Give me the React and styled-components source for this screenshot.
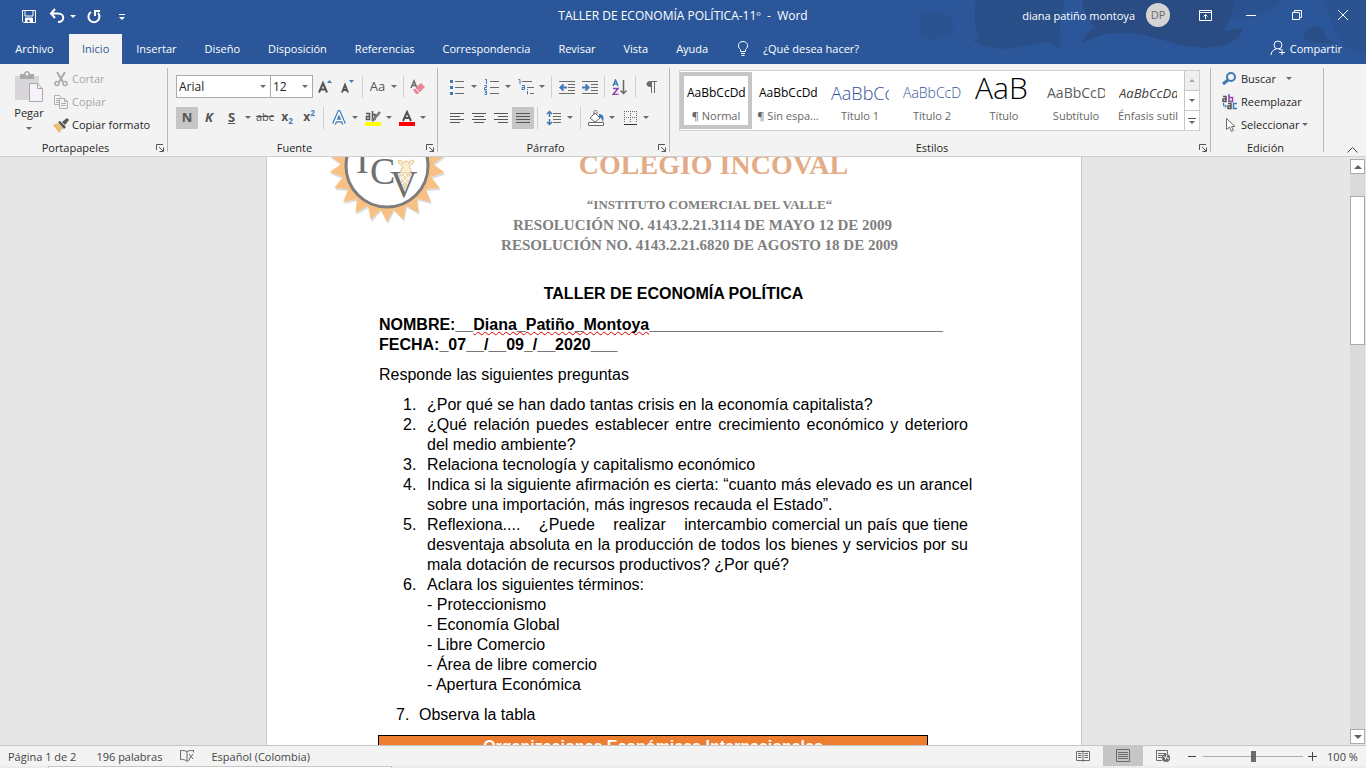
import React from 'react';
import styled, { createGlobalStyle } from 'styled-components';

const C = {
  blue: '#2b579a',
  ribbon: '#f3f3f3',
  line: '#c6c6c6',
  icon: '#6a6a6a',
  accent: '#3f7ab5',
  text: '#262626',
};

const Global = createGlobalStyle`
  *, *::before, *::after { box-sizing: border-box; }
  body { margin: 0; font-family: "Open Sans", "Noto Sans", sans-serif; font-size: 11px; color: ${C.text}; }
  button, input, select { font: inherit; color: inherit; }
  button { border: 0; background: none; padding: 0; cursor: pointer; }
  svg { display: block; flex: none; }
`;

const Shell = styled.div`
  display: flex;
  flex-direction: column;
  height: 100vh;
  overflow: hidden;
`;

/* ---------- title bar and tabs ---------- */

const Header = styled.header`
  position: relative;
  background: ${C.blue};
  color: #fff;
`;

const Waves = styled.svg`
  position: absolute;
  top: 0;
  right: 0;
`;

const TitleBar = styled.div`
  position: relative;
  display: grid;
  grid-template-columns: 1fr auto 1fr;
  align-items: center;
  height: 32px;
`;

const DocName = styled.span`
  padding-bottom: 2px;
  font-size: 12px;
`;

const QuickAccess = styled.div`
  display: flex;
  align-items: center;
  padding-left: 21px;
`;

const QuickButton = styled.button`
  display: flex;
  align-items: center;
  gap: 5px;
  margin-right: ${(p) => p.$after}px;
  color: #fff;
`;

const Account = styled.div`
  display: flex;
  align-items: center;
  justify-content: flex-end;
  padding-bottom: 2px;
`;

const Avatar = styled.span`
  width: 24px;
  height: 24px;
  margin: 0 12px 0 11px;
  border-radius: 50%;
  background: #d4d4d4;
  color: #6a6a6a;
  text-align: center;
  line-height: 24px;
`;

const WindowButton = styled.button`
  display: flex;
  align-items: center;
  justify-content: center;
  width: 46px;
  height: 30px;
  color: #fff;
`;

const TabRow = styled.nav`
  position: relative;
  display: flex;
  align-items: flex-end;
  height: 32px;
`;

const Tab = styled.button`
  height: 30px;
  padding: 0 ${(p) => (p.$active ? 13 : 14)}px 2px;
  background: ${(p) => (p.$active ? C.ribbon : 'transparent')};
  color: ${(p) => (p.$active ? C.blue : '#fff')};
  &:first-child { min-width: 69px; }
`;

const TellMe = styled.button`
  display: flex;
  align-items: center;
  gap: 13px;
  height: 30px;
  padding: 0 14px 2px;
  color: #fff;
`;

const Share = styled(TellMe)`
  gap: 4px;
  margin-left: auto;
  padding: 0 24px 2px 0;
`;

/* ---------- ribbon ---------- */

const Ribbon = styled.div`
  display: flex;
  height: 93px;
  background: ${C.ribbon};
  border-bottom: 1px solid #d0d0d0;
`;

const Group = styled.section`
  display: flex;
  flex-direction: column;
  width: ${(p) => p.$w}px;
`;

const GroupBody = styled.div`
  flex: 1;
  display: flex;
  flex-direction: ${(p) => (p.$rows ? 'column' : 'row')};
  gap: ${(p) => (p.$rows ? 8 : 0)}px;
  padding: ${(p) => p.$pad};
`;

const GroupFoot = styled.div`
  display: flex;
  align-items: center;
  height: 16px;
  padding: 0 3px 1px 0;
`;

const GroupName = styled.span`
  flex: 1;
  text-align: center;
  padding-right: ${(p) => (p.$launcher ? 5 : 0)}px;
`;

const GroupRule = styled.div`
  width: 1px;
  margin: 4px 0;
  background: #b9b9b9;
`;

const ToolRow = styled.div`
  display: flex;
  align-items: center;
  height: 23px;
`;

const Tool = styled.button`
  display: flex;
  align-items: center;
  justify-content: center;
  gap: 5px;
  width: ${(p) => p.$w || 22}px;
  height: 22px;
  background: ${(p) => (p.$on ? '#c6c6c6' : 'transparent')};
  color: #555;
`;

const Glyph = styled.span`
  min-width: 16px;
  text-align: center;
  white-space: nowrap;
  font-size: ${(p) => p.$size || 13}px;
  line-height: 18px;
  padding-bottom: 1px;
  font-weight: ${(p) => (p.$bold ? 700 : 400)};
  font-style: ${(p) => (p.$italic ? 'italic' : 'normal')};
  text-decoration: ${(p) => p.$line || 'none'};
  sub, sup { font-size: 8px; line-height: 0; color: ${C.accent}; }
`;

const ToolRule = styled.div`
  width: 1px;
  height: 22px;
  margin: 0 3px;
  background: #d0d0d0;
`;

const Field = styled.label`
  display: flex;
  align-items: center;
  width: ${(p) => p.$w}px;
  height: 23px;
  margin-right: ${(p) => p.$after}px;
  padding-right: 4px;
  background: #fff;
  border: 1px solid #ababab;
`;

const Choice = styled.select`
  flex: 1;
  min-width: 0;
  height: 100%;
  padding: 0 2px;
  border: 0;
  appearance: none;
  background: transparent;
  font-size: 12px;
  color: #222;
`;

const PasteButton = styled.button`
  display: flex;
  flex-direction: column;
  align-items: center;
  width: 42px;
  margin-right: 3px;
  line-height: 20px;
`;

const PasteCaret = styled.span`
  padding-top: 4px;
`;

const CommandList = styled.div`
  display: flex;
  flex-direction: column;
`;

const Command = styled.button`
  display: flex;
  align-items: center;
  gap: 3px;
  height: 23px;
  color: ${(p) => (p.disabled ? '#a6a6a6' : C.text)};
`;

const CaretGap = styled.span`
  width: 4px;
`;

const Gallery = styled.div`
  display: flex;
  height: 61px;
  background: #fff;
  border: 1px solid #d0d0d0;
`;

const StyleCard = styled.button`
  display: flex;
  flex-direction: column;
  width: 72px;
  height: 57px;
  margin-top: 1px;
  padding: 0 3px;
  border: 4px solid ${(p) => (p.$on ? '#c6c6c6' : 'transparent')};
`;

const Sample = styled.span`
  width: 100%;
  height: 31px;
  overflow: hidden;
  white-space: nowrap;
  text-align: left;
  line-height: ${(p) => (p.$size > 20 ? 24 : 34)}px;
  font-size: ${(p) => p.$size}px;
  font-weight: ${(p) => (p.$light ? 300 : 400)};
  font-style: ${(p) => (p.$italic ? 'italic' : 'normal')};
  color: ${(p) => p.$color || '#000'};
`;

const StyleName = styled.span`
  align-self: center;
  line-height: 18px;
  white-space: nowrap;
  color: #666;
`;

const GalleryNav = styled.div`
  display: flex;
  flex-direction: column;
  width: 15px;
  border-left: 1px solid ${C.line};
`;

const GalleryButton = styled.button`
  flex: 1;
  display: flex;
  flex-direction: column;
  gap: 2px;
  align-items: center;
  justify-content: center;
  background: ${(p) => (p.disabled ? '#e5e5e5' : '#fff')};
  opacity: ${(p) => (p.disabled ? 0.6 : 1)};
  & + & { border-top: 1px solid ${C.line}; }
`;

const Collapse = styled.button`
  align-self: flex-end;
  margin: 0 8px 3px auto;
`;

/* ---------- document ---------- */

const Workspace = styled.main`
  flex: 1;
  min-height: 0;
  display: flex;
  background: #e6e6e6;
`;

const Canvas = styled.div`
  flex: 1;
  display: flex;
  justify-content: center;
  align-items: flex-start;
  overflow: hidden;
`;

const Sheet = styled.article`
  width: 816px;
  min-height: 1056px;
  margin-top: -91px;
  padding: 40px 113px 96px 112px;
  background: #fff;
  border: 1px solid ${C.line};
  color: #000;
  font-family: "Liberation Sans", Arial, sans-serif;
  font-size: 16px;
  line-height: 20px;
`;

const Letterhead = styled.div`
  display: flex;
  height: 177px;
  margin-left: -50px;
`;

const LetterText = styled.div`
  flex: 1;
  padding: 40px 14px 0 0;
  text-align: center;
  white-space: nowrap;
  font-family: "Liberation Serif", "Times New Roman", serif;
  font-weight: 700;
  color: #808080;
`;

const School = styled.div`
  margin-bottom: 12px;
  padding-left: 28px;
  font-size: 28px;
  line-height: 36px;
  color: #e3ac86;
`;

const LetterLine = styled.div`
  padding-left: ${(p) => p.$indent || 0}px;
  font-size: ${(p) => p.$size}px;
`;

const Heading = styled.h1`
  margin: 0 0 11px;
  font-size: 16px;
  text-align: center;
`;

const Para = styled.p`
  margin: 0 0 10px;
  font-weight: ${(p) => (p.$bold ? 700 : 400)};
  white-space: nowrap;
`;

const Misspelt = styled.span`
  text-decoration: underline wavy #e00000 1px;
  text-decoration-skip-ink: none;
  text-underline-offset: 1px;
`;

const Questions = styled.ol`
  margin: 0 0 10px;
  padding: 0 0 0 ${(p) => p.$indent}px;
  list-style: none;
`;

const Question = styled.li`
  display: flex;
`;

const Num = styled.span`
  flex: none;
  width: ${(p) => p.$w || 24}px;
`;

const Justified = styled.div`
  flex: 1;
  min-width: 0;
  text-align: justify;
`;

const FullLine = styled.div`
  white-space: nowrap;
`;

const OrgTable = styled.table`
  width: 550px;
  margin-left: -1px;
  border-collapse: collapse;
  th { padding: 0; border: 1px solid #000; background: #ed7d31; color: #fff; height: 22px; }
  td { border: 1px solid #000; height: 22px; }
`;

const ScrollBar = styled.div`
  display: flex;
  flex-direction: column;
  width: 18px;
  padding: 2px 1px 1px 2px;
`;

const ScrollButton = styled.button`
  display: flex;
  align-items: center;
  justify-content: center;
  height: 15px;
  background: #fff;
  border: 1px solid #ababab;
`;

const ScrollTrack = styled.div`
  flex: 1;
  padding-top: 22px;
  background: #dadada;
`;

const ScrollThumb = styled.div`
  height: 28%;
  background: #fff;
  border: 1px solid #ababab;
`;

/* ---------- status bar ---------- */

const StatusBar = styled.footer`
  display: flex;
  align-items: center;
  height: 21px;
  background: ${C.ribbon};
  border-top: 1px solid ${C.line};
  padding-right: 8px;
  color: #444;
`;

const StatusItem = styled.button`
  margin-left: ${(p) => p.$before}px;
  white-space: nowrap;
`;

const Views = styled.div`
  display: flex;
  height: 20px;
  margin-left: auto;
`;

const ViewButton = styled.button`
  display: flex;
  align-items: center;
  justify-content: center;
  width: 40px;
  background: ${(p) => (p.$on ? '#c6c6c6' : 'transparent')};
`;

const ZoomStep = styled.button`
  width: 10px;
  margin: 0 5px;
`;

const ZoomRange = styled.input`
  width: 100px;
  height: 12px;
  margin: 0;
  appearance: none;
  background: linear-gradient(#ababab, #ababab) center / 100% 1px no-repeat;
  &::-webkit-slider-thumb { appearance: none; width: 5px; height: 11px; background: #6a6a6a; }
`;

const ZoomValue = styled.button`
  width: 31px;
  margin-left: 4px;
  white-space: nowrap;
`;

const DeskEdge = styled.div`
  height: 2px;
  padding-left: 48px;
  background: #ececec;
`;

const DeskBox = styled.div`
  width: 344px;
  height: 2px;
  background: #fff;
  border: 1px solid ${C.line};
  border-bottom: 0;
`;

/* ---------- drawings ---------- */

const Caret = ({ up, light }) => (
  <svg width="6" height="3" viewBox="0 0 6 3" fill={light ? '#fff' : '#6a6a6a'} aria-hidden="true">
    <path d={up ? 'M0 3h6L3 0z' : 'M0 0h6L3 3z'} />
  </svg>
);

const Pic = ({ w = 16, h = 16, children, ...rest }) => (
  <svg width={w} height={h} viewBox={`0 0 ${w} ${h}`} fill="none" stroke={C.icon} aria-hidden="true" {...rest}>
    {children}
  </svg>
);

const Launcher = () => (
  <button aria-label="Más opciones">
    <Pic w={8} h={8} stroke="#555">
      <path d="M.5 6V.5H7M3 3l4 4M7.5 3.5v4h-4" />
    </Pic>
  </button>
);

const Lines = ({ rows, color = '#555' }) => (
  <Pic stroke={color}>
    {rows.map(([x1, x2], i) => (
      <path key={i} d={`M${x1} ${3.5 + i * 3}H${x2}`} />
    ))}
  </Pic>
);

function Seal() {
  const teeth = 22;
  const pts = [];
  for (let i = 0; i < teeth * 2; i++) {
    const r = i % 2 ? 46 : 58;
    const a = Math.PI / 2 + (i * Math.PI) / teeth;
    pts.push(`${(58 + r * Math.cos(a)).toFixed(1)},${(57 + r * Math.sin(a)).toFixed(1)}`);
  }
  const points = pts.join(' ');
  return (
    <svg width="116" height="118" viewBox="0 0 116 118" aria-label="ICV">
      <polygon points={points} fill="#dcdcdc" transform="translate(1 2)" />
      <polygon points={points} fill="#f8c183" />
      <circle cx="58" cy="59" r="41" fill="#fff" stroke="#7d7d7d" strokeWidth="3" />
      <g fill="#707070" fontFamily="Liberation Serif" fontSize="38">
        <text x="27" y="66">I</text>
        <text x="41" y="77">C</text>
        <text x="61" y="90">V</text>
      </g>
      <path d="M69 67h14l-7 18z" fill="#ecd9b8" />
      <path d="M71 69l8 8M75 67l6 6M81 69l-8 8M77 67l-6 6" stroke="#fff" strokeWidth="1" />
      <path d="M69 54c1 4 4 3 5 7-3 0-3 5 0 5h6c3 0 3-5 0-5 1-4 4-3 5-7-3-2-5 0-5 3-1-4-5-4-6 0 0-3-2-5-5-3z" fill="#faedd6" stroke="#e8c389" />
    </svg>
  );
}

const tabs = ['Archivo', 'Inicio', 'Insertar', 'Diseño', 'Disposición', 'Referencias', 'Correspondencia', 'Revisar', 'Vista', 'Ayuda'];

const styleCards = [
  { name: '¶ Normal', size: 12, text: 'AaBbCcDd', on: true },
  { name: '¶ Sin espa...', size: 12, text: 'AaBbCcDd' },
  { name: 'Título 1', size: 18, text: 'AaBbCc', light: true, color: '#2f5496' },
  { name: 'Título 2', size: 14, text: 'AaBbCcDd', light: true, color: '#2f5496' },
  { name: 'Título', size: 30, text: 'AaB', light: true },
  { name: 'Subtítulo', size: 14, text: 'AaBbCcD', color: '#5a5a5a' },
  { name: 'Énfasis sutil', size: 13, text: 'AaBbCcDd', italic: true, color: '#404040' },
];

const terms = ['Proteccionismo', 'Economía Global', 'Libre Comercio', 'Área de libre comercio', 'Apertura Económica'];

const reflection =
  'Reflexiona....\u00a0\u00a0\u00a0 ¿Puede\u00a0\u00a0\u00a0 realizar\u00a0\u00a0\u00a0 intercambio comercial un país que tiene desventaja absoluta en la producción de todos los bienes y servicios por su mala dotación de recursos productivos? ¿Por qué?';

function Top() {
  return (
    <Header>
      <Waves width="446" height="64" viewBox="0 0 446 64" fill="#2a4c82" aria-hidden="true">
        <path d="M0 13c14-2 30 0 34 8s-6 16-8 14c-8 6-18 4-26 3z" opacity=".3" />
        <path d="M56 0h88c-2 18-6 32-4 48-9-6-18-6-27-4-20 6-44 8-62-5 2 1 6 1 8-1-5-12-5-26-3-38z" opacity=".7" />
        <path d="M162 0h152c0 12-4 22-12 30 8 2 12-2 20-2 0 10-12 17-28 19-24 3-42-5-66-11-26-6-48-4-66 8 2-8 6-14 14-16-8-8-14-18-14-28z" />
        <path d="M363 0h-49c0 8-2 14-4 20 24 0 40-8 53-20zM403 0h43v53c-14 0-24-8-30-20-5-10-7-22-13-33z" opacity=".4" />
        <path d="M384 38c0-8 6-12 12-12 8 0 10 7 9 12 6 0 8 4 7 6-10-2-24 0-28-6z" opacity=".8" />
      </Waves>
      <TitleBar>
        <QuickAccess>
          <QuickButton $after={12} aria-label="Guardar">
            <Pic stroke="#fff">
              <path d="M1.500 2.500h13v12h-12l-1-1z" />
              <path d="M4 3v5h8V3M4.500 14v-4h7v4" />
              <path d="M5 10h6v4H8.500v-2H6.500v2H5z" fill="#fff" stroke="none" />
            </Pic>
          </QuickButton>
          <QuickButton $after={10} aria-label="Deshacer">
            <Pic stroke="#fff" strokeWidth="2">
              <path d="M6 1L2 5.500 6 10M2 5.500h7c7 0 7 8.500 0 8.500" />
            </Pic>
            <Caret light />
          </QuickButton>
          <QuickButton $after={17} aria-label="Repetir">
            <Pic stroke="#fff" strokeWidth="2">
              <path d="M5 4a5.500 5.500 0 1 0 7 1M9 8V3h5" />
            </Pic>
          </QuickButton>
          <QuickButton $after={0} aria-label="Personalizar">
            <Pic w={6} h={7} stroke="#fff">
              <path d="M0 1.500h6" />
              <path d="M0 4h6L3 7z" fill="#fff" stroke="none" />
            </Pic>
          </QuickButton>
        </QuickAccess>
        <DocName>TALLER DE ECONOMÍA POLÍTICA-11º&nbsp; -&nbsp; Word</DocName>
        <Account>
          <span>diana patiño montoya</span>
          <Avatar>DP</Avatar>
          <WindowButton aria-label="Opciones de la cinta">
            <Pic w={13} h={11} stroke="#fff">
              <path d="M.5.5h12v10H.5zM.5 2.500h12M6.500 9V4.500M4.500 6.500l2-2 2 2" />
            </Pic>
          </WindowButton>
          <WindowButton aria-label="Minimizar">
            <Pic w={10} h={10} stroke="#fff"><path d="M0 5.500h10" /></Pic>
          </WindowButton>
          <WindowButton aria-label="Restaurar">
            <Pic w={10} h={10} stroke="#fff"><path d="M.5 2.500h7v7h-7zM2.500 2.500v-2h7v7h-2" /></Pic>
          </WindowButton>
          <WindowButton aria-label="Cerrar">
            <Pic w={10} h={10} stroke="#fff"><path d="M0 0l10 10M10 0L0 10" /></Pic>
          </WindowButton>
        </Account>
      </TitleBar>
      <TabRow>
        {tabs.map((t) => (
          <Tab key={t} $active={t === 'Inicio'}>{t}</Tab>
        ))}
        <TellMe>
          <Pic w={14} stroke="#fff">
            <path d="M4.500 11.500V9.500C1 7 2 1.500 7 1.500s6 5.500 2.500 8v2zM5 13.500h4M5.500 15.500h3" />
          </Pic>
          ¿Qué desea hacer?
        </TellMe>
        <Share>
          <Pic stroke="#fff">
            <circle cx="8" cy="5" r="4" />
            <path d="M1 15c0-3 2-5 5-6M9 9l2 1M12 9v6M9 12.500h6" />
          </Pic>
          Compartir
        </Share>
      </TabRow>
    </Header>
  );
}

const Foot = ({ name, launcher = true }) => (
  <GroupFoot>
    <GroupName $launcher={launcher}>{name}</GroupName>
    {launcher && <Launcher />}
  </GroupFoot>
);

function Clipboard() {
  return (
    <Group $w={167}>
      <GroupBody $pad="3px 0 0 8px">
        <PasteButton>
          <Pic w={28} h={36} stroke="none">
            <path d="M0 9h24v24H0z" fill="#d9d6da" />
            <path d="M5 12V7h4c0-4 6-4 6 0h4v5z" fill="#a9a9a9" />
            <circle cx="12" cy="7" r="1.500" fill="#f3f3f3" />
            <path d="M14.500 16.500h8l5 5v13h-13z" fill="#f7f2fa" stroke="#a9a9a9" />
            <path d="M22.500 16.500v5h5" stroke="#a9a9a9" />
          </Pic>
          Pegar
          <PasteCaret><Caret /></PasteCaret>
        </PasteButton>
        <CommandList>
          <Command disabled>
            <Pic stroke="#a9a9a9" strokeWidth="2">
              <path d="M4 1l6 10M12 1L6 11" />
              <circle cx="4" cy="12.500" r="2" strokeWidth="1.500" />
              <circle cx="12" cy="12.500" r="2" strokeWidth="1.500" />
            </Pic>
            Cortar
          </Command>
          <Command disabled>
            <Pic stroke="#b0acb4">
              <path d="M6 10.500H1.500v-9h5l2 2M3 4.500h3M3 6.500h3M3 8.500h3" />
              <path d="M6.500 4.500h5l3 3v7h-8zM11.500 4.500v3h3M8 9.500h5M8 11.500h5" fill="#f3f3f3" />
            </Pic>
            Copiar
          </Command>
          <Command>
            <Pic stroke="none">
              <path d="M0 8l5-2 5 5-4 5z" fill="#e8bd78" />
              <path d="M5 5l2-1 6 6-2 2z" fill="#555" />
              <path d="M9 5l5-4 2 2-4 5z" fill="#555" />
            </Pic>
            Copiar formato
          </Command>
        </CommandList>
      </GroupBody>
      <Foot name="Portapapeles" />
    </Group>
  );
}

function FontGroup() {
  return (
    <Group $w={269}>
      <GroupBody $rows $pad="11px 0 0 8px">
        <ToolRow>
          <Field $w={95} $after={-1}>
            <Choice aria-label="Fuente" defaultValue="Arial"><option>Arial</option></Choice>
            <Caret />
          </Field>
          <Field $w={43} $after={2}>
            <Choice aria-label="Tamaño de fuente" defaultValue="12"><option>12</option></Choice>
            <Caret />
          </Field>
          <Tool aria-label="Aumentar tamaño">
            <Pic><path d="M1 13.500L5 4l4 9.500M2.500 10.500h5" strokeWidth="2" stroke="#555" /><path d="M9 4h5l-2.500-3z" fill={C.accent} stroke="none" /></Pic>
          </Tool>
          <Tool aria-label="Disminuir tamaño">
            <Pic><path d="M2 13.500L5 6l3 7.500M3 11h4" strokeWidth="2" stroke="#555" /><path d="M9 1h5l-2.500 3z" fill={C.accent} stroke="none" /></Pic>
          </Tool>
          <ToolRule />
          <Tool $w={34}><Glyph>Aa</Glyph><Caret /></Tool>
          <ToolRule />
          <Tool aria-label="Borrar formato">
            <Pic><path d="M1 9l3-7 3 7M2 6.500h4" strokeWidth="1.500" /><path d="M3 11l8-7 4 4-7 7H6z" fill="#e8889a" stroke="none" /><path d="M5 9l5 5" stroke="#f3f3f3" /></Pic>
          </Tool>
        </ToolRow>
        <ToolRow>
          <Tool $on><Glyph $bold>N</Glyph></Tool>
          <Tool><Glyph $bold $italic>K</Glyph></Tool>
          <Tool $w={34}><Glyph $bold $line="underline">S</Glyph><Caret /></Tool>
          <Tool><Glyph $size={11} $line="line-through">abc</Glyph></Tool>
          <Tool><Glyph $bold $size={12}>x<sub>2</sub></Glyph></Tool>
          <Tool><Glyph $bold $size={12}>x<sup>2</sup></Glyph></Tool>
          <ToolRule />
          <Tool $w={34} aria-label="Efectos de texto">
            <Pic><path d="M3 14L8 2.500 13 14M5 10.500h6" stroke={C.accent} strokeWidth="4" /><path d="M3 14L8 2.500 13 14M5 10.500h6" stroke="#fff" strokeWidth="1.500" /></Pic>
            <Caret />
          </Tool>
          <Tool $w={34} aria-label="Color de resaltado">
            <Pic>
              <path d="M1 3.500h3.500v6H1.500v-3h3M7.500 1v8.500H10v-5H7.500" stroke="#555" strokeWidth="1.500" />
              <path d="M15 2l-6 7-2 2" strokeWidth="2.500" stroke="#777" />
              <path d="M0 12h16v4H0z" fill="#ff0" stroke="none" />
            </Pic>
            <Caret />
          </Tool>
          <Tool $w={34} aria-label="Color de fuente">
            <Pic><path d="M4 11l4-9 4 9M5.500 8h5" strokeWidth="2" stroke="#555" /><path d="M0 12h16v4H0z" fill="#f00" stroke="none" /></Pic>
            <Caret />
          </Tool>
        </ToolRow>
      </GroupBody>
      <Foot name="Fuente" />
    </Group>
  );
}

function ParagraphGroup() {
  return (
    <Group $w={231}>
      <GroupBody $rows $pad="11px 0 0 8px">
        <ToolRow>
          <Tool $w={34} aria-label="Viñetas">
            <Pic>
              <path d="M5 2.500h9M5 8.500h9M5 14.500h9" />
              <path d="M0 1h3v3H0zM0 7h3v3H0zM0 13h3v3H0z" fill={C.accent} stroke="none" />
            </Pic>
            <Caret />
          </Tool>
          <Tool $w={34} aria-label="Numeración">
            <Pic>
              <path d="M6 2.500h9M6 8.500h9M6 14.500h9" />
              <path d="M1 .5h1.500V5M.5 6.500h2v2h-2v2H3M.5 12h2v3.500h-2M1 13.500h1" stroke={C.accent} />
            </Pic>
            <Caret />
          </Tool>
          <Tool $w={34} aria-label="Lista multinivel">
            <Pic>
              <path d="M4 2.500h10M9 8.500h7M12 14.500h4" />
              <path d="M.5.5H2V5M4 6.500h2.500v4H4v-2h2M9.500 10v1M9.500 12v3.500" stroke={C.accent} />
            </Pic>
            <Caret />
          </Tool>
          <ToolRule />
          <Tool $w={23} aria-label="Disminuir sangría">
            <Pic><path d="M0 2.500h16M9 5.500h7M9 8.500h7M9 11.500h7M0 14.500h16" /><path d="M8 8.500H2M4.500 5.500L1.500 8.500l3 3" stroke={C.accent} strokeWidth="2" /></Pic>
          </Tool>
          <Tool $w={23} aria-label="Aumentar sangría">
            <Pic><path d="M0 2.500h16M9 5.500h7M9 8.500h7M9 11.500h7M0 14.500h16" /><path d="M0 8.500h6M3.500 5.500l3 3-3 3" stroke={C.accent} strokeWidth="2" /></Pic>
          </Tool>
          <ToolRule />
          <Tool $w={24} aria-label="Ordenar">
            <Pic>
              <path d="M1 7l2.500-6L6 7M2 5h3" stroke={C.accent} strokeWidth="1.500" />
              <path d="M1 9.500h5l-5 6h5.500" stroke="#8e44ad" strokeWidth="1.500" />
              <path d="M11.500 1v14M8.500 11.500l3 3 3-3" strokeWidth="1.500" />
            </Pic>
          </Tool>
          <ToolRule />
          <Tool $w={24} aria-label="Mostrar todo">
            <Pic><path d="M7 2.500h7M8.500 2v12M11.500 2v12" /><path d="M8 2C2 1.500 2 8.500 8 8z" fill={C.icon} stroke="none" /></Pic>
          </Tool>
        </ToolRow>
        <ToolRow>
          <Tool aria-label="Alinear a la izquierda"><Lines rows={[[1, 15], [1, 11], [1, 15], [1, 11]]} /></Tool>
          <Tool aria-label="Centrar"><Lines rows={[[1, 15], [3, 13], [1, 15], [3, 13]]} /></Tool>
          <Tool aria-label="Alinear a la derecha"><Lines rows={[[1, 15], [5, 15], [1, 15], [5, 15]]} /></Tool>
          <Tool $on aria-label="Justificar"><Lines rows={[[1, 15], [1, 15], [1, 15], [1, 15]]} /></Tool>
          <ToolRule />
          <Tool $w={36} aria-label="Interlineado">
            <Pic><path d="M7 3.500h8M7 6.500h8M7 9.500h8M7 12.500h8" /><path d="M3.500 2v5M3.500 9v5M1 4l2.500-2.500L6 4M1 12l2.500 2.500L6 12" stroke={C.accent} strokeWidth="1.500" /></Pic>
            <Caret />
          </Tool>
          <ToolRule />
          <Tool $w={34} aria-label="Sombreado">
            <Pic>
              <path d="M2 8l5-5 5 5-5 4zM6 5V1.500C6 0 9 0 9 1.500V4" fill="#fff" />
              <path d="M11 4c5 0 5 4 4 8-1-2-1-4-4-5z" fill={C.accent} stroke="none" />
              <path d="M.5 12.500h15v3H.5z" fill="#fff" />
            </Pic>
            <Caret />
          </Tool>
          <Tool $w={34} aria-label="Bordes">
            <Pic><path d="M2 1.500h13M2 7.500h13M2.500 1v12M8.500 1v12M14.500 1v12" strokeDasharray="1 1" /><path d="M2 14.500h13" stroke="#333" /></Pic>
            <Caret />
          </Tool>
        </ToolRow>
      </GroupBody>
      <Foot name="Párrafo" />
    </Group>
  );
}

function StylesGroup() {
  return (
    <Group $w={540}>
      <GroupBody $pad="6px 9px 0">
        <Gallery>
          {styleCards.map((s) => (
            <StyleCard key={s.name} $on={s.on}>
              <Sample $size={s.size} $light={s.light} $italic={s.italic} $color={s.color}>{s.text}</Sample>
              <StyleName>{s.name}</StyleName>
            </StyleCard>
          ))}
          <GalleryNav>
            <GalleryButton disabled aria-label="Fila anterior"><Caret up /></GalleryButton>
            <GalleryButton aria-label="Fila siguiente"><Caret /></GalleryButton>
            <GalleryButton aria-label="Más estilos">
              <Pic w={8} h={1}><path d="M0 .5h8" stroke="#555" /></Pic>
              <Caret />
            </GalleryButton>
          </GalleryNav>
        </Gallery>
      </GroupBody>
      <Foot name="Estilos" />
    </Group>
  );
}

function EditGroup() {
  return (
    <Group $w={112}>
      <GroupBody $pad="3px 0 0 11px">
        <CommandList>
          <Command>
            <Pic><circle cx="9" cy="6" r="4" stroke={C.accent} strokeWidth="2" /><path d="M6 9l-5 4" stroke={C.accent} strokeWidth="3" /></Pic>
            Buscar
            <CaretGap />
            <Caret />
          </Command>
          <Command>
            <Pic>
              <path d="M1 2.500h3v5H1V5h3" stroke="#555" strokeWidth="1.500" />
              <path d="M7 0v7.500h3.500V3.500H7" stroke="#8e44ad" strokeWidth="1.500" />
              <path d="M1.500 9v3H4M3 10.500L4.500 12 3 13.500" stroke={C.accent} />
              <path d="M6 9.500h3v5H6V12h3" stroke="#555" strokeWidth="1.500" />
              <path d="M15 9.500h-3.500v5H15" stroke={C.accent} strokeWidth="1.500" />
            </Pic>
            Reemplazar
          </Command>
          <Command>
            <Pic><path d="M4.500 1.500v11l3-2.500 2 4.500 2-1-2-4h3.500z" fill="#fff" /></Pic>
            Seleccionar
            <Caret />
          </Command>
        </CommandList>
      </GroupBody>
      <Foot name="Edición" launcher={false} />
    </Group>
  );
}

function Document() {
  return (
    <Sheet>
      <Letterhead>
        <Seal />
        <LetterText>
          <School>COLEGIO INCOVAL</School>
          <LetterLine $size={13} $indent={20}>“INSTITUTO COMERCIAL DEL VALLE“</LetterLine>
          <LetterLine $size={15} $indent={6}>RESOLUCIÓN NO. 4143.2.21.3114 DE MAYO 12 DE 2009</LetterLine>
          <LetterLine $size={15}>RESOLUCIÓN NO. 4143.2.21.6820 DE AGOSTO 18 DE 2009</LetterLine>
        </LetterText>
      </Letterhead>
      <Heading>TALLER DE ECONOMÍA POLÍTICA</Heading>
      <Para $bold>
        NOMBRE:__<Misspelt>Diana_Patiño_Montoya</Misspelt>{'_'.repeat(33)}
        <br />
        FECHA:_07__/__09_/__2020___
      </Para>
      <Para>Responde las siguientes preguntas</Para>
      <Questions $indent={24}>
        <Question><Num>1.</Num><Justified>¿Por qué se han dado tantas crisis en la economía capitalista?</Justified></Question>
        <Question><Num>2.</Num><Justified>¿Qué relación puedes establecer entre crecimiento económico y deterioro del&nbsp;medio ambiente?</Justified></Question>
        <Question><Num>3.</Num><Justified>Relaciona tecnología y capitalismo económico</Justified></Question>
        <Question>
          <Num>4.</Num>
          <Justified>
            <FullLine>Indica si la siguiente afirmación es cierta: “cuanto más elevado es un arancel</FullLine>
            sobre una importación, más ingresos recauda el Estado”.
          </Justified>
        </Question>
        <Question><Num>5.</Num><Justified>{reflection}</Justified></Question>
        <Question>
          <Num>6.</Num>
          <Justified>
            Aclara los siguientes términos:
            {terms.map((t) => <div key={t}>{`- ${t}`}</div>)}
          </Justified>
        </Question>
      </Questions>
      <Questions $indent={17} start={7}>
        <Question><Num $w={23}>7.</Num><Justified>Observa la tabla</Justified></Question>
      </Questions>
      <OrgTable>
        <thead><tr><th>Organizaciones Económicas Internacionales</th></tr></thead>
        <tbody><tr><td /></tr></tbody>
      </OrgTable>
    </Sheet>
  );
}

function Status() {
  return (
    <>
      <StatusBar>
        <StatusItem $before={8}>Página 1 de 2</StatusItem>
        <StatusItem $before={20}>196 palabras</StatusItem>
        <StatusItem $before={18} aria-label="Revisión">
          <Pic w={15} h={14}><path d="M7 2.500c-2-1-4-1-6.500-1v9c3 0 5 0 6.500 2 1-1 2-1.500 3-2M7 2.500v10M7 2.500c2-1 4-1 6.500-1v2M9 5l4 5M13 5l-4 5" /></Pic>
        </StatusItem>
        <StatusItem $before={16}>Español (Colombia)</StatusItem>
        <Views>
          <ViewButton aria-label="Modo de lectura">
            <Pic w={14} h={14}><path d="M7 2.500H.5v9H7M7 2.500h6.500v9H7M7 1v12M2 4.500h3.500M2 6.500h3.500M2 8.500h3.500M8.500 4.500H12M8.500 6.500H12M8.500 8.500H12" /></Pic>
          </ViewButton>
          <ViewButton $on aria-label="Diseño de impresión">
            <Pic w={14} h={14}><path d="M.5.5h13v12H.5zM2 3.500h10M2 5.500h10M2 7.500h10M2 9.500h10" /></Pic>
          </ViewButton>
          <ViewButton aria-label="Diseño web">
            <Pic w={15} h={14}><path d="M6 11.500H.5v-10h11V5M2 4.500h8M2 6.500h5M2 8.500h4" /><circle cx="10" cy="9" r="4" fill={C.icon} stroke="none" /><path d="M7.500 7.500l2 1v2M11 6l-1 2 3 2" stroke="#fff" /></Pic>
          </ViewButton>
        </Views>
        <ZoomStep aria-label="Alejar"><Pic w={9} h={9} stroke="#444"><path d="M0 4.500h8" /></Pic></ZoomStep>
        <ZoomRange type="range" min="0" max="100" defaultValue="50" aria-label="Zoom" />
        <ZoomStep aria-label="Acercar"><Pic w={9} h={9} stroke="#444"><path d="M0 4.500h9M4.500 0v9" /></Pic></ZoomStep>
        <ZoomValue>100 %</ZoomValue>
      </StatusBar>
      <DeskEdge><DeskBox /></DeskEdge>
    </>
  );
}

export default function App() {
  return (
    <Shell>
      <Global />
      <Top />
      <Ribbon>
        <Clipboard />
        <GroupRule />
        <FontGroup />
        <GroupRule />
        <ParagraphGroup />
        <GroupRule />
        <StylesGroup />
        <GroupRule />
        <EditGroup />
        <GroupRule />
        <Collapse aria-label="Contraer la cinta">
          <Pic w={11} h={6} stroke="#444"><path d="M.5 5.500l5-5 5 5" /></Pic>
        </Collapse>
      </Ribbon>
      <Workspace>
        <Canvas><Document /></Canvas>
        <ScrollBar>
          <ScrollButton aria-label="Subir"><Pic w={8} h={4}><path d="M0 4h8L4 0z" fill="#606060" stroke="none" /></Pic></ScrollButton>
          <ScrollTrack><ScrollThumb /></ScrollTrack>
          <ScrollButton aria-label="Bajar"><Pic w={8} h={4}><path d="M0 0h8L4 4z" fill="#606060" stroke="none" /></Pic></ScrollButton>
        </ScrollBar>
      </Workspace>
      <Status />
    </Shell>
  );
}
